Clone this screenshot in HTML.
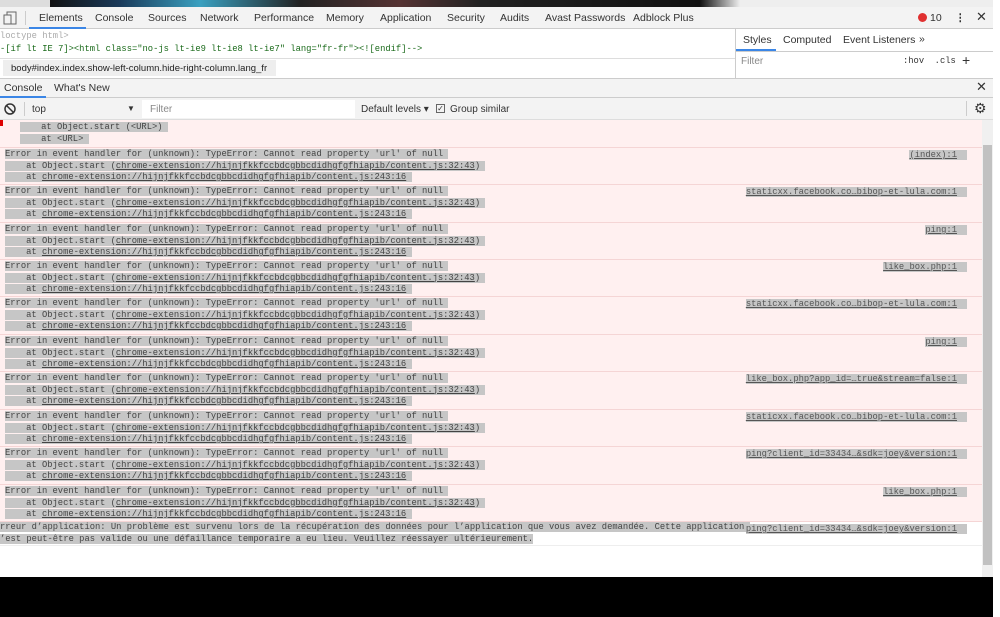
<!DOCTYPE html>
<html><head><meta charset="utf-8"><style>
*{margin:0;padding:0;box-sizing:border-box}
body{width:1000px;height:617px;overflow:hidden;background:#fff;font-family:"Liberation Sans",sans-serif;font-size:11px;color:#333;position:relative}
.a{position:absolute}
.mono{font-family:"Liberation Mono",monospace;font-size:8.8px;white-space:pre}
.row{position:absolute;left:0;width:982px;height:38px;background:#fff0f0;border-top:1px solid #f5d5d5}
.l{position:absolute;left:5px;line-height:11.5px;color:#444}
.l span{background:#c6c6c6}
.lk{position:absolute;right:15px;top:2px;background:#c6c6c6;padding-right:10px;text-decoration:underline;color:#555}
u{text-decoration:underline}
.tab{position:absolute;top:12px;font-size:10.5px;color:#333;white-space:nowrap}
</style></head><body>
<div class="a" style="left:0;top:0;width:1000px;height:7px;background:linear-gradient(90deg,#ddd 0,#ddd 50px,#111 50px,#1a3a5a 120px,#3aa0c0 200px,#222 300px,#533 400px,#222 480px,#111 700px,#eee 740px)"></div>
<div class="a" style="left:0;top:7px;width:1000px;height:22px;background:#f3f3f3;border-bottom:1px solid #ccc"></div>
<svg class="a" style="left:3px;top:11px" width="14" height="14"><rect x="1" y="4" width="7" height="9" fill="none" stroke="#666"/><path d="M4 4V1h9v12H8" fill="none" stroke="#666"/></svg>
<div class="a" style="left:25px;top:11px;width:1px;height:14px;background:#ccc"></div>
<div class="a" style="left:29px;top:27px;width:57px;height:2px;background:#3b86e6"></div>
<div class="tab" style="left:39px">Elements</div>
<div class="tab" style="left:95px">Console</div>
<div class="tab" style="left:148px">Sources</div>
<div class="tab" style="left:200px">Network</div>
<div class="tab" style="left:254px">Performance</div>
<div class="tab" style="left:326px">Memory</div>
<div class="tab" style="left:380px">Application</div>
<div class="tab" style="left:447px">Security</div>
<div class="tab" style="left:500px">Audits</div>
<div class="tab" style="left:545px">Avast Passwords</div>
<div class="tab" style="left:633px">Adblock Plus</div>
<div class="a" style="left:918px;top:13px;width:9px;height:9px;border-radius:50%;background:#e03030"></div>
<div class="tab" style="left:930px">10</div>
<div class="tab" style="left:955px;font-weight:bold">⋮</div>
<div class="tab" style="left:976px;font-size:13px;top:9px">✕</div>
<!-- elements -->
<div class="a mono" style="left:0;top:31px;color:#aaa">loctype html&gt;</div>
<div class="a mono" style="left:0;top:44px;color:#1a6a1a">-[if lt IE 7]&gt;&lt;html class="no-js lt-ie9 lt-ie8 lt-ie7" lang="fr-fr"&gt;&lt;![endif]--&gt;</div>
<div class="a" style="left:0;top:58px;width:735px;height:1px;background:#ddd"></div>
<div class="a" style="left:735px;top:29px;width:1px;height:49px;background:#ccc"></div>
<div class="a" style="left:3px;top:60px;width:273px;height:16px;background:#eee;font-size:9.5px;padding:3px 0 0 8px;color:#222;white-space:nowrap;overflow:hidden">body#index.index.show-left-column.hide-right-column.lang_fr</div>
<div class="tab" style="left:743px;top:34px">Styles</div>
<div class="tab" style="left:783px;top:34px">Computed</div>
<div class="tab" style="left:843px;top:34px">Event Listeners</div>
<div class="tab" style="left:919px;top:33px">»</div>
<div class="a" style="left:736px;top:49px;width:40px;height:2px;background:#3b86e6"></div>
<div class="a" style="left:736px;top:51px;width:258px;height:1px;background:#ccc"></div>
<div class="tab" style="left:741px;top:56px;color:#888;font-size:10px">Filter</div>
<div class="a mono" style="left:903px;top:56px;color:#333">:hov  .cls</div>
<div class="tab" style="left:962px;top:52px;font-size:14px">+</div>
<!-- drawer -->
<div class="a" style="left:0;top:78px;width:1000px;height:20px;background:#f3f3f3;border-top:1px solid #ccc;border-bottom:1px solid #ccc"></div>
<div class="tab" style="left:4px;top:82px">Console</div>
<div class="tab" style="left:54px;top:82px">What's New</div>
<div class="a" style="left:0;top:96px;width:46px;height:2px;background:#3b86e6"></div>
<div class="tab" style="left:976px;top:79px;font-size:13px">✕</div>
<div class="a" style="left:0;top:98px;width:1000px;height:22px;background:#f3f3f3;border-bottom:1px solid #ddd"></div>
<svg class="a" style="left:4px;top:103px" width="12" height="12"><circle cx="6" cy="6" r="5" fill="none" stroke="#333" stroke-width="1.5"/><path d="M2.5 2.5l7 7" stroke="#333" stroke-width="1.5"/></svg>
<div class="a" style="left:24px;top:102px;width:1px;height:14px;background:#ccc"></div>
<div class="tab" style="left:32px;top:104px;font-size:10px">top</div>
<div class="tab" style="left:127px;top:104px;font-size:8px">▼</div>
<div class="a" style="left:142px;top:100px;width:213px;height:18px;background:#fff"></div>
<div class="tab" style="left:150px;top:104px;color:#888;font-size:10px">Filter</div>
<div class="tab" style="left:361px;top:104px;font-size:10px">Default levels ▾</div>
<div class="a" style="left:436px;top:104px;width:9px;height:9px;border:1px solid #666;font-size:8px;line-height:7px;text-align:center">✓</div>
<div class="tab" style="left:450px;top:104px;font-size:10px">Group similar</div>
<div class="a" style="left:966px;top:101px;width:1px;height:15px;background:#ccc"></div>
<div class="tab" style="left:974px;top:100px;font-size:14px">⚙</div>
<!-- console -->
<div class="a" style="left:0;top:120px;width:982px;height:457px;background:#fff"></div>
<div class="row" style="top:120px;height:27px;border:none"><div class="l mono" style="top:2px;left:20px"><span>    at Object.start (&lt;URL&gt;) </span>
<span>    at &lt;URL&gt; </span></div></div>
<div class="a" style="left:0;top:120px;width:3px;height:6px;background:#d00"></div>
<div id="rows"></div>
<div class="a" style="left:0;top:521px;width:982px;height:25px;border-top:1px solid #f5d5d5;border-bottom:1px solid #eee"></div>
<div class="a l mono" style="left:0;top:522px"><span>rreur d’application: Un problème est survenu lors de la récupération des données pour l’application que vous avez demandée. Cette application </span>
<span>’est peut-être pas valide ou une défaillance temporaire a eu lieu. Veuillez réessayer ultérieurement.</span></div>
<div class="a mono" style="right:33px;top:524px;background:#c6c6c6;padding-right:10px;color:#555;text-decoration:underline">ping?client_id=33434…&amp;sdk=joey&amp;version:1</div>
<div class="a" style="left:982px;top:120px;width:11px;height:457px;background:#f0f0f0"></div>
<div class="a" style="left:983px;top:145px;width:9px;height:420px;background:#c1c1c1"></div>
<div class="a" style="left:0;top:577px;width:993px;height:40px;background:#000"></div>
<div class="a" style="left:993px;top:0;width:7px;height:617px;background:#fff"></div>
<script>
var links=["(index):1","staticxx.facebook.co…bibop-et-lula.com:1","ping:1","like_box.php:1","staticxx.facebook.co…bibop-et-lula.com:1","ping:1","like_box.php?app_id=…true&stream=false:1","staticxx.facebook.co…bibop-et-lula.com:1","ping?client_id=33434…&sdk=joey&version:1","like_box.php:1"];
var ys=[147,184,222,259,296,334,371,409,446,484];var h="";
for(var i=0;i<10;i++){h+='<div class="row" style="top:'+ys[i]+'px"><div class="l mono" style="top:1px"><span>Error in event handler for (unknown): TypeError: Cannot read property \'url\' of null </span>\n<span>    at Object.start (<u>chrome-extension://hijnjfkkfccbdcgbbcdidhgfgfhiapib/content.js:32:43</u>) </span>\n<span>    at <u>chrome-extension://hijnjfkkfccbdcgbbcdidhgfgfhiapib/content.js:243:16</u> </span></div><div class="lk mono">'+links[i].replace(/&/g,'&amp;')+'</div></div>';}
document.getElementById('rows').outerHTML=h;
</script>
</body></html>
